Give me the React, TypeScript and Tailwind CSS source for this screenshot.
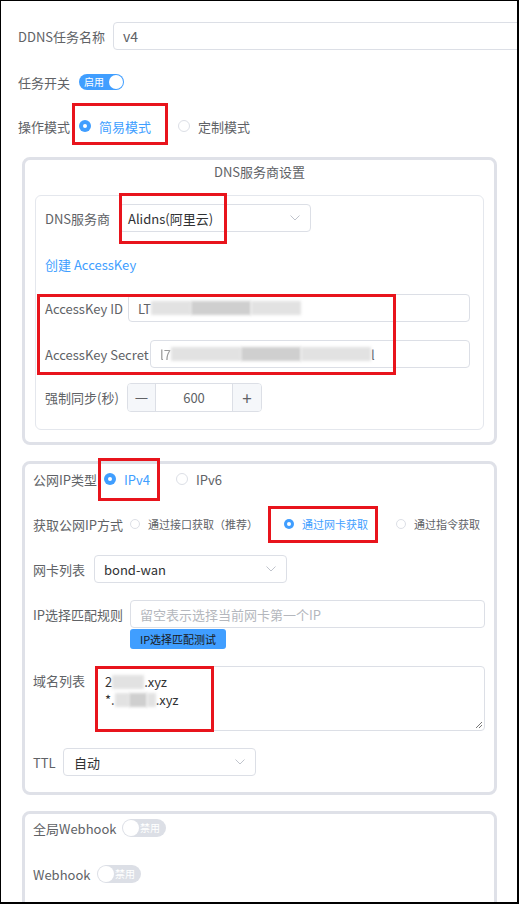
import React from "react";

const Chevron = () => (
  <svg width="10" height="6" viewBox="0 0 10 6" fill="none">
    <path d="M0.5 0.5 L5 5 L9.5 0.5" stroke="#c0c4cc" strokeWidth="1" />
  </svg>
);

const Radio = ({ checked, small }: { checked?: boolean; small?: boolean }) =>
  checked ? (
    <span
      className={`${small ? "w-[10px] h-[10px]" : "w-3 h-3"} rounded-full bg-[#409eff] flex items-center justify-center shrink-0`}
    >
      <span className="w-[4px] h-[4px] rounded-full bg-white" />
    </span>
  ) : (
    <span
      className={`${small ? "w-[10px] h-[10px]" : "w-3 h-3"} rounded-full border border-[#dcdfe6] bg-white shrink-0`}
    />
  );

const Blur = ({ w, dark }: { w: number; dark?: boolean }) => (
  <span
    className={`inline-block h-[14px] align-middle blur-[1.5px] ${dark ? "bg-[#cfcfcf]" : "bg-[#e2e2e2]"}`}
    style={{ width: w }}
  />
);

export default function App() {
  return (
    <div className="relative w-[519px] h-[904px] overflow-hidden bg-white border-l border-t border-r-2 border-b-2 border-black font-[family-name:'Noto_Sans_CJK_SC',sans-serif] text-[13px] text-[#606266]">
      {/* Top rows */}
      <div className="pl-[17px] pt-[21px]">
        <div className="flex items-center h-[28px]">
          <span className="w-[95px] shrink-0 leading-none">DDNS任务名称</span>
          <div className="flex items-center shrink-0 h-[28px] w-[430px] border border-[#dcdfe6] rounded-[4px] pl-[9px] text-[14px] text-[#606266]">
            v4
          </div>
        </div>
        <div className="flex items-center h-[24px] mt-[20px]">
          <span className="w-[61px] leading-none">任务开关</span>
          <div className="relative flex items-center w-[45px] h-[16px] rounded-full bg-[#409eff]">
            <span className="pl-[5px] text-[10px] leading-none text-white">启用</span>
            <span className="absolute right-[1px] top-[1px] w-[14px] h-[14px] rounded-full bg-white" />
          </div>
        </div>
        <div className="flex items-center h-[24px] mt-[20px]">
          <span className="w-[61px] leading-none">操作模式</span>
          <div className="flex items-center w-[99px] gap-[8px]">
            <Radio checked />
            <span className="text-[#409eff] leading-none">简易模式</span>
          </div>
          <div className="flex items-center gap-[8px]">
            <Radio />
            <span className="leading-none">定制模式</span>
          </div>
        </div>
      </div>

      {/* Card 1 */}
      <div className="ml-[21px] mt-[19px] w-[475px] border-[3px] border-[#dfe1e8] rounded-[8px] px-[10px] pb-[12px]">
        <div className="h-[22px] flex items-center justify-center leading-none">DNS服务商设置</div>
        <div className="mt-[13px] border border-[#e4e7ed] rounded-[6px] pl-[9px] pr-[13px] pt-[8px] pb-[17px]">
          <div className="flex items-center h-[28px]">
            <span className="w-[74px] leading-none">DNS服务商</span>
            <div className="flex items-center justify-between w-[192px] h-[28px] border border-[#dcdfe6] rounded-[4px] pl-[8px] pr-[10px] text-[#303133]">
              <span className="leading-none">Alidns(阿里云)</span>
              <Chevron />
            </div>
          </div>
          <div className="mt-[24px] h-[16px] flex items-center text-[#409eff] leading-none">创建 AccessKey</div>
          <div className="flex items-center h-[28px] mt-[22px]">
            <span className="w-[83px] shrink-0 leading-none">AccessKey ID</span>
            <div className="flex items-center flex-1 h-[28px] border border-[#dcdfe6] rounded-[4px] pl-[9px] overflow-hidden whitespace-nowrap">
              <span className="leading-none">LT</span>
              <Blur w={40} />
              <Blur w={60} dark />
              <Blur w={50} />
            </div>
          </div>
          <div className="flex items-center h-[28px] mt-[18px]">
            <span className="w-[105px] shrink-0 leading-none">AccessKey Secret</span>
            <div className="flex items-center flex-1 h-[28px] border border-[#dcdfe6] rounded-[4px] pl-[9px] overflow-hidden whitespace-nowrap">
              <span className="leading-none text-[#9a9a9a] blur-[0.6px]">l7</span>
              <Blur w={70} />
              <Blur w={60} dark />
              <Blur w={70} />
              <span className="leading-none">l</span>
            </div>
          </div>
          <div className="flex items-center h-[29px] mt-[15px]">
            <span className="w-[82px] shrink-0 leading-none">强制同步(秒)</span>
            <div className="flex items-stretch w-[135px] h-[29px] border border-[#dcdfe6] rounded-[4px] overflow-hidden">
              <div className="w-[28px] flex items-center justify-center bg-[#f5f7fa] border-r border-[#dcdfe6] text-[15px] text-[#606266]">
                —
              </div>
              <div className="flex-1 flex items-center justify-center leading-none">600</div>
              <div className="w-[29px] flex items-center justify-center bg-[#f5f7fa] border-l border-[#dcdfe6] text-[17px] text-[#606266]">
                +
              </div>
            </div>
          </div>
        </div>
      </div>

      {/* Card 2 */}
      <div className="ml-[21px] mt-[16px] w-[475px] border-[3px] border-[#dfe1e8] rounded-[8px] pl-[8px] pr-[9px] pt-[4px] pb-[16px]">
        <div className="flex items-center h-[22px]">
          <span className="w-[71px] shrink-0 leading-none">公网IP类型</span>
          <div className="flex items-center w-[72px] gap-[8px]">
            <Radio checked />
            <span className="text-[#409eff] leading-none">IPv4</span>
          </div>
          <div className="flex items-center gap-[8px]">
            <Radio />
            <span className="leading-none">IPv6</span>
          </div>
        </div>
        <div className="flex items-center h-[20px] mt-[24px] text-[11px]">
          <span className="w-[97px] shrink-0 text-[13px] leading-none">获取公网IP方式</span>
          <div className="flex items-center w-[154px] gap-[8px]">
            <Radio small />
            <span className="leading-none whitespace-nowrap">通过接口获取（推荐）</span>
          </div>
          <div className="flex items-center w-[112px] gap-[8px]">
            <Radio small checked />
            <span className="leading-none text-[#409eff]">通过网卡获取</span>
          </div>
          <div className="flex items-center gap-[8px]">
            <Radio small />
            <span className="leading-none">通过指令获取</span>
          </div>
        </div>
        <div className="flex items-center h-[28px] mt-[21px]">
          <span className="w-[61px] leading-none">网卡列表</span>
          <div className="flex items-center justify-between w-[193px] h-[28px] border border-[#dcdfe6] rounded-[4px] pl-[9px] pr-[10px] text-[#303133]">
            <span className="leading-none">bond-wan</span>
            <Chevron />
          </div>
        </div>
        <div className="flex mt-[17px]">
          <span className="w-[97px] shrink-0 h-[28px] flex items-center leading-none">IP选择匹配规则</span>
          <div className="flex-1 flex flex-col">
            <div className="flex items-center h-[28px] border border-[#dcdfe6] rounded-[4px] pl-[9px] text-[#b4b7bd]">
              <span className="leading-none">留空表示选择当前网卡第一个IP</span>
            </div>
            <div className="mt-[1px] w-[96px] h-[20px] flex items-center justify-center bg-[#409eff] rounded-[3px] text-[11px] text-[#1a1a1a] leading-none">
              IP选择匹配测试
            </div>
          </div>
        </div>
        <div className="flex mt-[17px]">
          <span className="w-[62px] shrink-0 pt-[8px] leading-none">域名列表</span>
          <div className="relative flex-1 h-[65px] border border-[#dcdfe6] rounded-[4px] pl-[9px] pt-[6px] text-[#303133] leading-[18px]">
            <div className="flex items-center">
              <span>2</span>
              <Blur w={32} />
              <span>.xyz</span>
            </div>
            <div className="flex items-center">
              <span>*.</span>
              <Blur w={14} />
              <Blur w={18} dark />
              <Blur w={9} />
              <span>.xyz</span>
            </div>
            <svg className="absolute right-[1px] bottom-[1px]" width="8" height="8" viewBox="0 0 8 8">
              <path d="M7 1 L1 7 M7 4 L4 7" stroke="#555" strokeWidth="0.8" />
            </svg>
          </div>
        </div>
        <div className="flex items-center h-[28px] mt-[17px]">
          <span className="w-[30px] leading-none">TTL</span>
          <div className="flex items-center justify-between w-[193px] h-[28px] border border-[#dcdfe6] rounded-[4px] pl-[10px] pr-[10px] text-[#303133]">
            <span className="leading-none">自动</span>
            <Chevron />
          </div>
        </div>
      </div>

      {/* Card 3 */}
      <div className="ml-[21px] mt-[16px] w-[475px] h-[200px] border-[3px] border-[#dfe1e8] rounded-[8px] pl-[8px] pt-[5px]">
        <div className="flex items-center h-[18px]">
          <span className="w-[89px] leading-none">全局Webhook</span>
          <div className="relative flex items-center justify-end w-[44px] h-[18px] rounded-full bg-[#dcdfe6]">
            <span className="absolute left-[1px] top-[1px] w-[16px] h-[16px] rounded-full bg-white" />
            <span className="pr-[6px] text-[10px] leading-none text-white">禁用</span>
          </div>
        </div>
        <div className="flex items-center h-[18px] mt-[28px]">
          <span className="w-[64px] leading-none">Webhook</span>
          <div className="relative flex items-center justify-end w-[44px] h-[18px] rounded-full bg-[#dcdfe6]">
            <span className="absolute left-[1px] top-[1px] w-[16px] h-[16px] rounded-full bg-white" />
            <span className="pr-[6px] text-[10px] leading-none text-white">禁用</span>
          </div>
        </div>
      </div>

      {/* Red annotation boxes */}
      <div className="absolute left-[71px] top-[102px] w-[96px] h-[42px] border-[3px] border-[#e8141c]" />
      <div className="absolute left-[118px] top-[192px] w-[108px] h-[51px] border-[3px] border-[#e8141c]" />
      <div className="absolute left-[36px] top-[293px] w-[359px] h-[81px] border-[3px] border-[#e8141c]" />
      <div className="absolute left-[97px] top-[457px] w-[62px] h-[43px] border-[3px] border-[#e8141c]" />
      <div className="absolute left-[267px] top-[505px] w-[110px] h-[37px] border-[3px] border-[#e8141c]" />
      <div className="absolute left-[94px] top-[665px] w-[119px] h-[66px] border-[3px] border-[#e8141c]" />
    </div>
  );
}
